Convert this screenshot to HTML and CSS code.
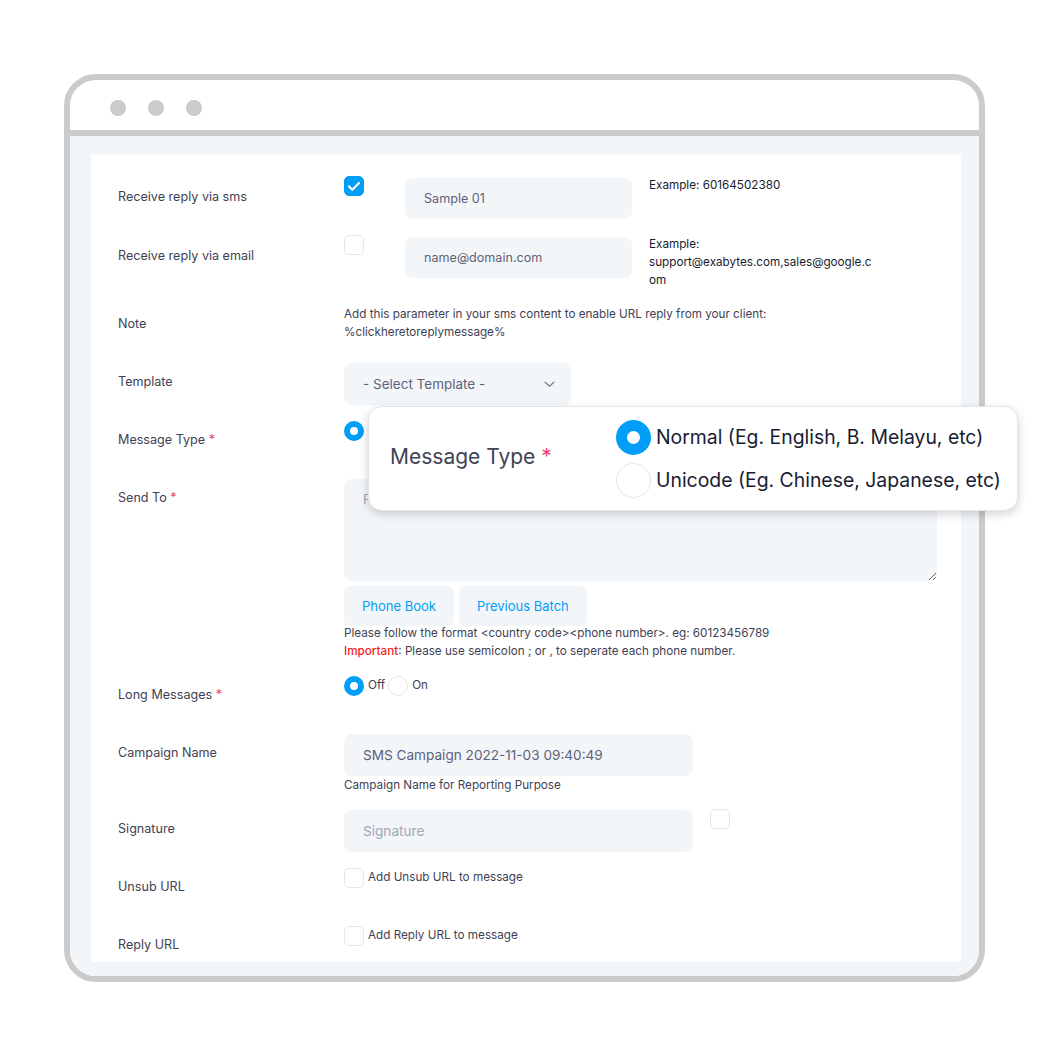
FILE: index.html
```html
<!DOCTYPE html>
<html lang="en">
<head>
    <meta charset="UTF-8">
    <meta name="viewport" content="width=device-width, initial-scale=1.0">
    <title>Send SMS</title>
    <link rel="stylesheet" href="styles.css">
</head>
<body>

<div class="stage">
    <div class="window">
        <div class="titlebar">
            <span class="dot"></span>
            <span class="dot"></span>
            <span class="dot"></span>
        </div>

        <div class="content">
            <div class="card">

                <div class="row">
                    <div class="label first">Receive reply via sms</div>
                    <div class="control inline">
                        <span class="check checked">
                            <svg viewBox="0 0 20 20" width="20" height="20"><path d="M5 10.5l3.3 3.3L15 7" fill="none" stroke="#fff" stroke-width="2.2" stroke-linecap="round" stroke-linejoin="round"/></svg>
                        </span>
                        <div class="input short">Sample 01</div>
                        <div class="example">Example: 60164502380</div>
                    </div>
                </div>

                <div class="row">
                    <div class="label first">Receive reply via email</div>
                    <div class="control inline">
                        <span class="check"></span>
                        <div class="input short">name@domain.com</div>
                        <div class="example">Example: support@exabytes.com,sales@google.com</div>
                    </div>
                </div>

                <div class="row">
                    <div class="label">Note</div>
                    <div class="control">
                        <div class="note">Add this parameter in your sms content to enable URL reply from your client:<br>%clickheretoreplymessage%</div>
                    </div>
                </div>

                <div class="row">
                    <div class="label">Template</div>
                    <div class="control">
                        <div class="input select">
                            <span>- Select Template -</span>
                            <svg viewBox="0 0 12 8" width="11" height="7"><path d="M1 1.5l5 4.5 5-4.5" fill="none" stroke="#7e8299" stroke-width="1.6" stroke-linecap="round" stroke-linejoin="round"/></svg>
                        </div>
                    </div>
                </div>

                <div class="row">
                    <div class="label">Message Type <span class="req">*</span></div>
                    <div class="control inline radios">
                        <span class="radio on"></span>
                    </div>
                </div>

                <div class="row">
                    <div class="label">Send To <span class="req">*</span></div>
                    <div class="control">
                        <textarea class="textarea" placeholder="Phone number"></textarea>
                        <div class="btns">
                            <button class="btn">Phone Book</button>
                            <button class="btn">Previous Batch</button>
                        </div>
                        <div class="help">
                            Please follow the format &lt;country code&gt;&lt;phone number&gt;. eg: 60123456789<br>
                            <span class="important">Important</span>: Please use semicolon ; or , to seperate each phone number.
                        </div>
                    </div>
                </div>

                <div class="row">
                    <div class="label">Long Messages <span class="req">*</span></div>
                    <div class="control inline radios">
                        <span class="radio on"></span><span class="opt">Off</span>
                        <span class="radio"></span><span class="opt">On</span>
                    </div>
                </div>

                <div class="row">
                    <div class="label">Campaign Name</div>
                    <div class="control">
                        <div class="input wide">SMS Campaign 2022-11-03 09:40:49</div>
                        <div class="hint">Campaign Name for Reporting Purpose</div>
                    </div>
                </div>

                <div class="row">
                    <div class="label">Signature</div>
                    <div class="control inline">
                        <div class="input wide placeholder">Signature</div>
                        <span class="check side"></span>
                    </div>
                </div>

                <div class="row">
                    <div class="label">Unsub URL</div>
                    <div class="control inline radios">
                        <span class="check"></span><span class="opt">Add Unsub URL to message</span>
                    </div>
                </div>

                <div class="row">
                    <div class="label">Reply URL</div>
                    <div class="control inline radios">
                        <span class="check"></span><span class="opt">Add Reply URL to message</span>
                    </div>
                </div>

            </div>
        </div>
    </div>

    <!-- zoomed callout over the message type row -->
    <div class="popup">
        <div class="popup-label">Message Type <span class="req">*</span></div>
        <div class="popup-options">
            <div class="popup-opt"><span class="big-radio on"></span>Normal (Eg. English, B. Melayu, etc)</div>
            <div class="popup-opt"><span class="big-radio"></span>Unicode (Eg. Chinese, Japanese, etc)</div>
        </div>
    </div>
</div>

</body>
</html>
```

FILE: styles.css
```css
body {
    margin: 0;
    background-color: #fff;
    font-family: Inter, "Noto Sans", Arial, sans-serif;
    color: #3f4254;
}
.stage {
    position: relative;
    width: 1050px;
    height: 1050px;
    padding: 74px 0 0 64px;
    box-sizing: border-box;
}
.window {
    width: 921px;
    height: 908px;
    border: 6px solid #cbcbcb;
    border-radius: 32px;
    box-sizing: border-box;
    overflow: hidden;
    background-color: #fff;
}
.titlebar {
    height: 44px;
    padding: 6px 0 0 40px;
    border-bottom: 6px solid #cbcbcb;
    display: flex;
    align-items: center;
    gap: 22px;
}
.dot {
    width: 16px;
    height: 16px;
    border-radius: 50%;
    background-color: #cbcbcb;
}
.content {
    height: 840px;
    padding: 19px 18px 0 21px;
    box-sizing: border-box;
    background-color: #f3f6f9;
}
.card {
    height: 807px;
    padding: 21px 27px 0;
    box-sizing: border-box;
    background-color: #fff;
    overflow: hidden;
}
.row {
    display: grid;
    grid-template-columns: 226px 1fr;
    min-height: 42px;
    margin-bottom: 16px;
}
.label {
    font-size: 12.6px;
    line-height: 18px;
    padding-top: 10px;
    color: #3f4254;
}
.label.first {
    padding-top: 12px;
}
.req {
    color: #f1416c;
}
.control.inline {
    display: flex;
    align-items: flex-start;
}
.check {
    flex: none;
    width: 20px;
    height: 20px;
    border: 1px solid #e4e6ef;
    border-radius: 5px;
    box-sizing: border-box;
    background-color: #fff;
}
.check.checked {
    border-color: #009ef7;
    background-color: #009ef7;
}
.check svg {
    display: block;
    margin: -1px;
}
.input {
    height: 41px;
    padding: 0 19px;
    display: flex;
    align-items: center;
    box-sizing: border-box;
    border-radius: 8px;
    background-color: #f3f6f9;
    font-size: 12.6px;
    color: #5e6278;
}
.input.short {
    width: 227px;
    margin: 2px 0 0 41px;
}
.input.wide {
    width: 349px;
    height: 42px;
    font-size: 13.6px;
}
.input.placeholder {
    color: #a1a5b7;
}
.input.select {
    width: 227px;
    height: 42px;
    justify-content: space-between;
    padding-right: 16px;
    font-size: 13.5px;
}
.example {
    width: 226px;
    margin-left: 17px;
    font-size: 11.7px;
    line-height: 18px;
    color: #181c32;
    overflow-wrap: anywhere;
}
.note {
    font-size: 11.7px;
    line-height: 18px;
    color: #3f4254;
}
.textarea {
    display: block;
    width: 593px;
    height: 102px;
    padding: 12px 19px;
    box-sizing: border-box;
    border: none;
    border-radius: 8px;
    background-color: #f3f6f9;
    font-family: inherit;
    font-size: 13px;
    color: #5e6278;
}
.textarea::placeholder {
    color: #a1a5b7;
}
.btns {
    display: flex;
    gap: 5px;
    margin-top: 5px;
}
.btn {
    height: 40px;
    padding: 0 18px;
    border: none;
    border-radius: 6px;
    background-color: #f3f6f9;
    font-family: inherit;
    font-size: 13px;
    color: #009ef7;
}
.help {
    margin-top: -2px;
    font-size: 11.7px;
    line-height: 18px;
    color: #3f4254;
}
.important {
    color: #f01d1d;
    font-weight: 500;
}
.radios.inline {
    align-items: center;
    height: 20px;
}
.radio {
    flex: none;
    width: 20px;
    height: 20px;
    border-radius: 50%;
    border: 1px solid #e4e6ef;
    box-sizing: border-box;
    background-color: #fff;
}
.radio.on {
    border: 6px solid #009ef7;
}
.opt {
    margin: -2px 3px 0 4px;
    font-size: 11.7px;
    line-height: 18px;
    color: #3f4254;
}
.hint {
    font-size: 11.7px;
    line-height: 18px;
    color: #3f4254;
}
.check.side {
    margin: -1px 0 0 17px;
}
.popup {
    position: absolute;
    left: 368px;
    top: 406px;
    width: 650px;
    height: 105px;
    box-sizing: border-box;
    padding: 0 0 0 21px;
    display: flex;
    align-items: center;
    background-color: #fff;
    border: 1px solid #e6e6e6;
    border-radius: 14px;
    box-shadow: 0 3px 10px rgba(0, 0, 0, 0.18);
}
.popup-label {
    width: 226px;
    flex: none;
    padding-bottom: 4px;
    font-size: 21px;
    color: #3f4254;
}
.popup-options {
    display: flex;
    flex-direction: column;
    gap: 8px;
}
.popup-opt {
    display: flex;
    align-items: center;
    gap: 5px;
    font-size: 19.4px;
    color: #181c32;
}
.big-radio {
    flex: none;
    width: 35px;
    height: 35px;
    border-radius: 50%;
    border: 1px solid #e4e6ef;
    box-sizing: border-box;
    background-color: #fff;
}
.big-radio.on {
    border: 11px solid #009ef7;
}
```
